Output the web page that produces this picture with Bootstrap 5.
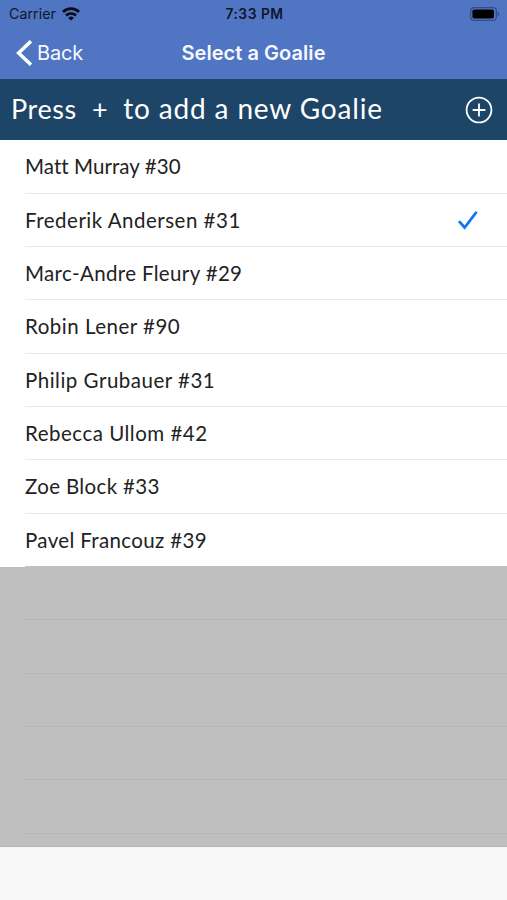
<!DOCTYPE html>
<html lang="en">
<head>
<meta charset="utf-8">
<meta name="viewport" content="width=device-width, initial-scale=1">
<title>Select a Goalie</title>
<link href="https://cdn.jsdelivr.net/npm/bootstrap@5.3.0/dist/css/bootstrap.min.css" rel="stylesheet">
<style>
  body { height: 900px; overflow: hidden; font-family: Inter, sans-serif; background: #bfbfbf; }
  svg { display: block; flex: none; }
  .topbar { height: 79px; background: #5075c3; }
  .statusbar { height: 27px; padding: 0 7px 0 9px; font-size: 14px; line-height: 27px; color: #10162a; }
  .carrier { font-size: 14.2px; letter-spacing: .05px; }
  .signal { gap: 6px; }
  .clock { font-size: 13.8px; font-weight: 600; letter-spacing: .5px; line-height: 26px; padding-top: 1px; }
  .titlebar { height: 52px; padding: 0 16px; color: #f7f9ff; font-size: 20px; line-height: 52px; }
  .back-label { font-size: 20px; letter-spacing: -.2px; padding-left: 4px; }
  .screen-title { font-size: 20px; font-weight: 600; letter-spacing: .05px; line-height: 52px; }
  .hint { height: 61px; padding: 0 14px 0 11px; background: #1d4567; color: #fff; font-family: Lato, sans-serif; font-size: 27px; letter-spacing: .6px; white-space: pre; }
  .hint-wide { font-size: 28px; letter-spacing: .85px; line-height: 1; }
  .roster { font-family: Lato, sans-serif; font-size: 20.5px; line-height: 52px; color: #222; letter-spacing: .5px; }
  .roster-row { height: 53.33px; padding-left: 25px; background: #fff; }
  .roster-row:first-child { height: 53.8px; }
  .row-inner { height: 100%; padding-right: 28px; border-bottom: 1px solid #e9e9e9; }
  .roster-row.blank { background: #bfbfbf; }
  .blank .row-inner { border-color: #b5b5b5; }
  .roster-row.last .row-inner { border-color: #bfbfbf; }
  .snug { letter-spacing: .06px; }
  .close-set { letter-spacing: .35px; }
  .toolbar { height: 54px; background: #f8f8f8; border-top: 1px solid #b2b2b2; }
</style>
</head>
<body class="d-flex flex-column">
<header class="topbar flex-shrink-0">
  <div class="statusbar row g-0 align-items-center">
    <div class="col d-flex align-items-center signal">
      <span class="carrier">Carrier</span>
      <svg width="18" height="14" viewBox="0 0 18 14" fill="none" stroke="#0a0d18" stroke-width="2.7"><path d="M1 5a11.4 11.4 0 0 1 16 0M4 8.5a7.2 7.2 0 0 1 10 0"/><path d="M9 13.5 6.2 10.9a4 4 0 0 1 5.6 0z" fill="#0a0d18" stroke="none"/></svg>
    </div>
    <div class="col-auto clock">7:33 PM</div>
    <div class="col d-flex justify-content-end">
      <svg width="30" height="14" viewBox="0 0 30 14"><rect x=".6" y=".6" width="25.8" height="12.8" rx="3.4" fill="none" stroke="#344d85" stroke-width="1.2"/><rect x="2.4" y="2.4" width="21.6" height="9.2" rx="1.8"/><path d="M27.6 4.7c2.2.8 2.2 3.8 0 4.6z" fill="#344d85"/></svg>
    </div>
  </div>
  <nav class="titlebar row g-0 align-items-center">
    <div class="col d-flex align-items-center">
      <svg width="17" height="26" viewBox="0 0 17 26" fill="none" stroke="#fff" stroke-width="3.5"><path d="M15 1.2 2.6 13 15 24.8"/></svg>
      <span class="back-label">Back</span>
    </div>
    <div class="col-auto screen-title">Select a Goalie</div>
    <div class="col"></div>
  </nav>
</header>
<section class="hint d-flex align-items-center justify-content-between flex-shrink-0"><span>Press  +  <span class="hint-wide">to add a new Goalie</span></span><svg width="28" height="28" viewBox="0 0 28 28" fill="none" stroke="#fff" stroke-width="1.8"><circle cx="14" cy="14" r="12.4"/><path d="M14 7.6v12.8M7.6 14h12.8"/></svg></section>
<main class="roster flex-grow-1 overflow-hidden">
  <div class="roster-row"><div class="row-inner d-flex align-items-center"><span class="snug">Matt Murray #30</span></div></div>
  <div class="roster-row"><div class="row-inner d-flex align-items-center justify-content-between"><span>Frederik Andersen #31</span><svg width="22" height="22" viewBox="0 0 22 22" fill="none" stroke="#0b78f0" stroke-width="2.7"><path d="M2 12.1 7.6 18.5 19.6 2.9"/></svg></div></div>
  <div class="roster-row"><div class="row-inner"><span class="close-set">Marc-Andre Fleury #29</span></div></div>
  <div class="roster-row"><div class="row-inner"><span>Robin Lener #90</span></div></div>
  <div class="roster-row"><div class="row-inner"><span>Philip Grubauer #31</span></div></div>
  <div class="roster-row"><div class="row-inner"><span>Rebecca Ullom #42</span></div></div>
  <div class="roster-row"><div class="row-inner"><span class="close-set">Zoe Block #33</span></div></div>
  <div class="roster-row last"><div class="row-inner"><span class="close-set">Pavel Francouz #39</span></div></div>
  <div class="roster-row blank"><div class="row-inner"></div></div>
  <div class="roster-row blank"><div class="row-inner"></div></div>
  <div class="roster-row blank"><div class="row-inner"></div></div>
  <div class="roster-row blank"><div class="row-inner"></div></div>
  <div class="roster-row blank"><div class="row-inner"></div></div>
  <div class="roster-row blank"><div class="row-inner"></div></div>
</main>
<footer class="toolbar flex-shrink-0"></footer>
<script src="https://cdn.jsdelivr.net/npm/bootstrap@5.3.0/dist/js/bootstrap.bundle.min.js"></script>
</body>
</html>
